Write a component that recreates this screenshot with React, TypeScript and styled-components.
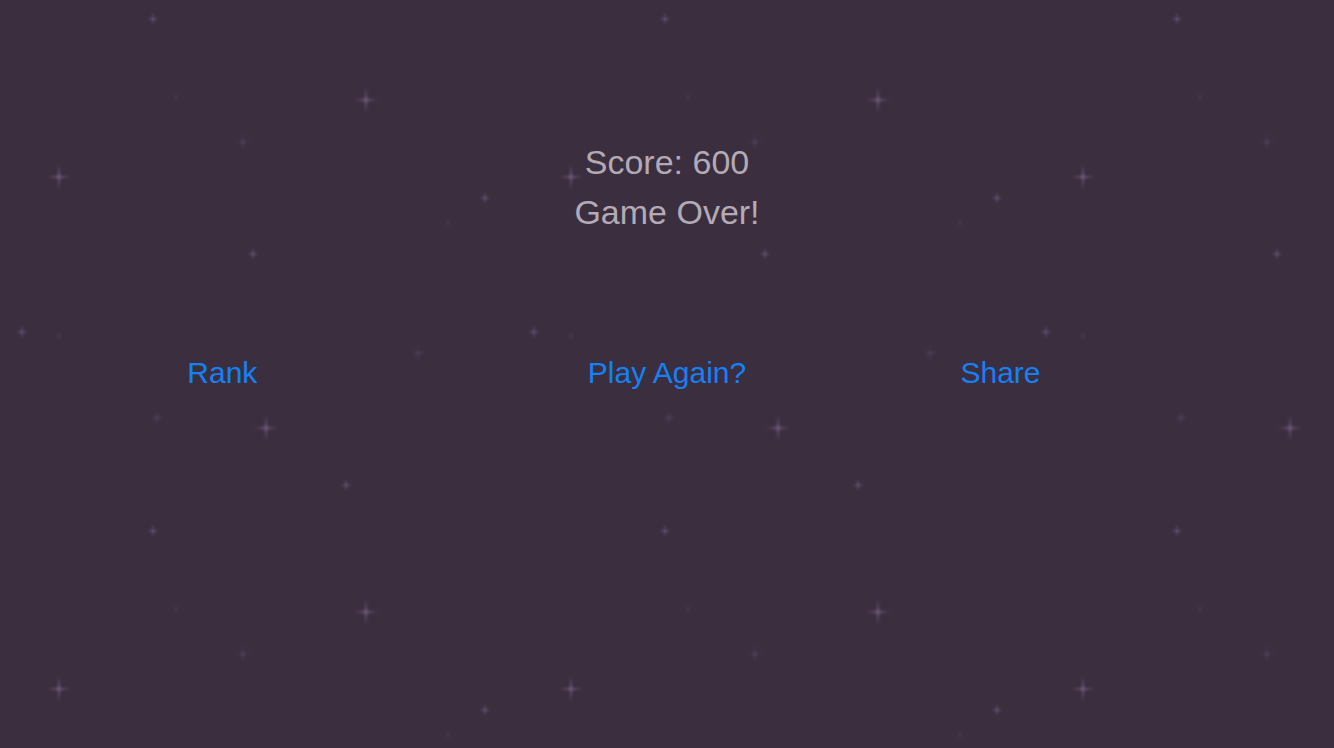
import React from "react";
import styled, { createGlobalStyle } from "styled-components";

const GlobalStyle = createGlobalStyle`
  html, body {
    margin: 0;
    padding: 0;
    background: #3b2e3f;
  }
  #root {
    min-height: 100vh;
  }
`;

const Screen = styled.div`
  position: relative;
  width: 100%;
  min-height: 100vh;
  overflow: hidden;
  background: #3b2e3f;
  font-family: "Liberation Sans", Arial, Helvetica, sans-serif;
  display: flex;
  flex-direction: column;
`;

const StarLayer = styled.svg`
  position: absolute;
  inset: 0;
  width: 100%;
  height: 100%;
  z-index: 0;
  pointer-events: none;
`;

const Content = styled.main`
  position: relative;
  z-index: 1;
  display: flex;
  flex-direction: column;
  padding-top: 137px;
  gap: 117px;
`;

const ScoreBlock = styled.section`
  display: flex;
  flex-direction: column;
  align-items: center;
`;

const InfoLine = styled.div`
  font-size: 34px;
  line-height: 50px;
  color: #b3aab6;
  text-align: center;
`;

const ActionRow = styled.nav`
  display: grid;
  grid-template-columns: repeat(6, 1fr);
`;

const ActionButton = styled.button<{ $span: number }>`
  grid-column: span ${(p) => p.$span};
  justify-self: center;
  background: none;
  border: none;
  padding: 0;
  margin: 0;
  font-family: inherit;
  font-size: 30px;
  line-height: 38px;
  color: #1581f5;
  cursor: pointer;
`;

type Star = { x: number; y: number; l: number; o: number };

const stars: Star[] = [
  { x: 366, y: 100, l: 12, o: 0.55 },
  { x: 59, y: 177, l: 12, o: 0.55 },
  { x: 266, y: 428, l: 12, o: 0.55 },
  { x: 153, y: 19, l: 6, o: 0.45 },
  { x: 485, y: 198, l: 6, o: 0.45 },
  { x: 253, y: 254, l: 6, o: 0.45 },
  { x: 22, y: 332, l: 6, o: 0.45 },
  { x: 346, y: 485, l: 6, o: 0.45 },
  { x: 243, y: 142, l: 8, o: 0.22 },
  { x: 418, y: 353, l: 7, o: 0.22 },
  { x: 157, y: 418, l: 7, o: 0.22 },
  { x: 176, y: 97, l: 3, o: 0.15 },
  { x: 448, y: 223, l: 3, o: 0.15 },
  { x: 59, y: 336, l: 3, o: 0.15 },
];

const StarField: React.FC = () => (
  <StarLayer aria-hidden="true">
    <defs>
      <linearGradient id="hfade" x1="0" y1="0" x2="1" y2="0">
        <stop offset="0" stopColor="#7d6591" stopOpacity="0" />
        <stop offset="0.5" stopColor="#8a719e" stopOpacity="1" />
        <stop offset="1" stopColor="#7d6591" stopOpacity="0" />
      </linearGradient>
      <linearGradient id="vfade" x1="0" y1="0" x2="0" y2="1">
        <stop offset="0" stopColor="#7d6591" stopOpacity="0" />
        <stop offset="0.5" stopColor="#8a719e" stopOpacity="1" />
        <stop offset="1" stopColor="#7d6591" stopOpacity="0" />
      </linearGradient>
      <filter id="soft" x="-50%" y="-50%" width="200%" height="200%">
        <feGaussianBlur stdDeviation="0.9" />
      </filter>
      <pattern id="stars" x="0" y="0" width="512" height="512" patternUnits="userSpaceOnUse">
        {stars.map((s, i) => (
          <g key={i} transform={`translate(${s.x} ${s.y})`} opacity={s.o} filter="url(#soft)">
            <rect x={-s.l} y={-1.2} width={s.l * 2} height={2.4} fill="url(#hfade)" />
            <rect x={-1.2} y={-s.l * 1.1} width={2.4} height={s.l * 2.2} fill="url(#vfade)" />
            <circle r={s.l > 8 ? 2.5 : 1.6} fill="#8e76a2" opacity="0.8" />
          </g>
        ))}
      </pattern>
    </defs>
    <rect width="100%" height="100%" fill="url(#stars)" />
  </StarLayer>
);

export default function App() {
  return (
    <>
      <GlobalStyle />
      <Screen>
        <StarField />
        <Content>
          <ScoreBlock>
            <InfoLine>Score: 600</InfoLine>
            <InfoLine>Game Over!</InfoLine>
          </ScoreBlock>
          <ActionRow>
            <ActionButton $span={2}>Rank</ActionButton>
            <ActionButton $span={2}>Play Again?</ActionButton>
            <ActionButton $span={1}>Share</ActionButton>
          </ActionRow>
        </Content>
      </Screen>
    </>
  );
}
